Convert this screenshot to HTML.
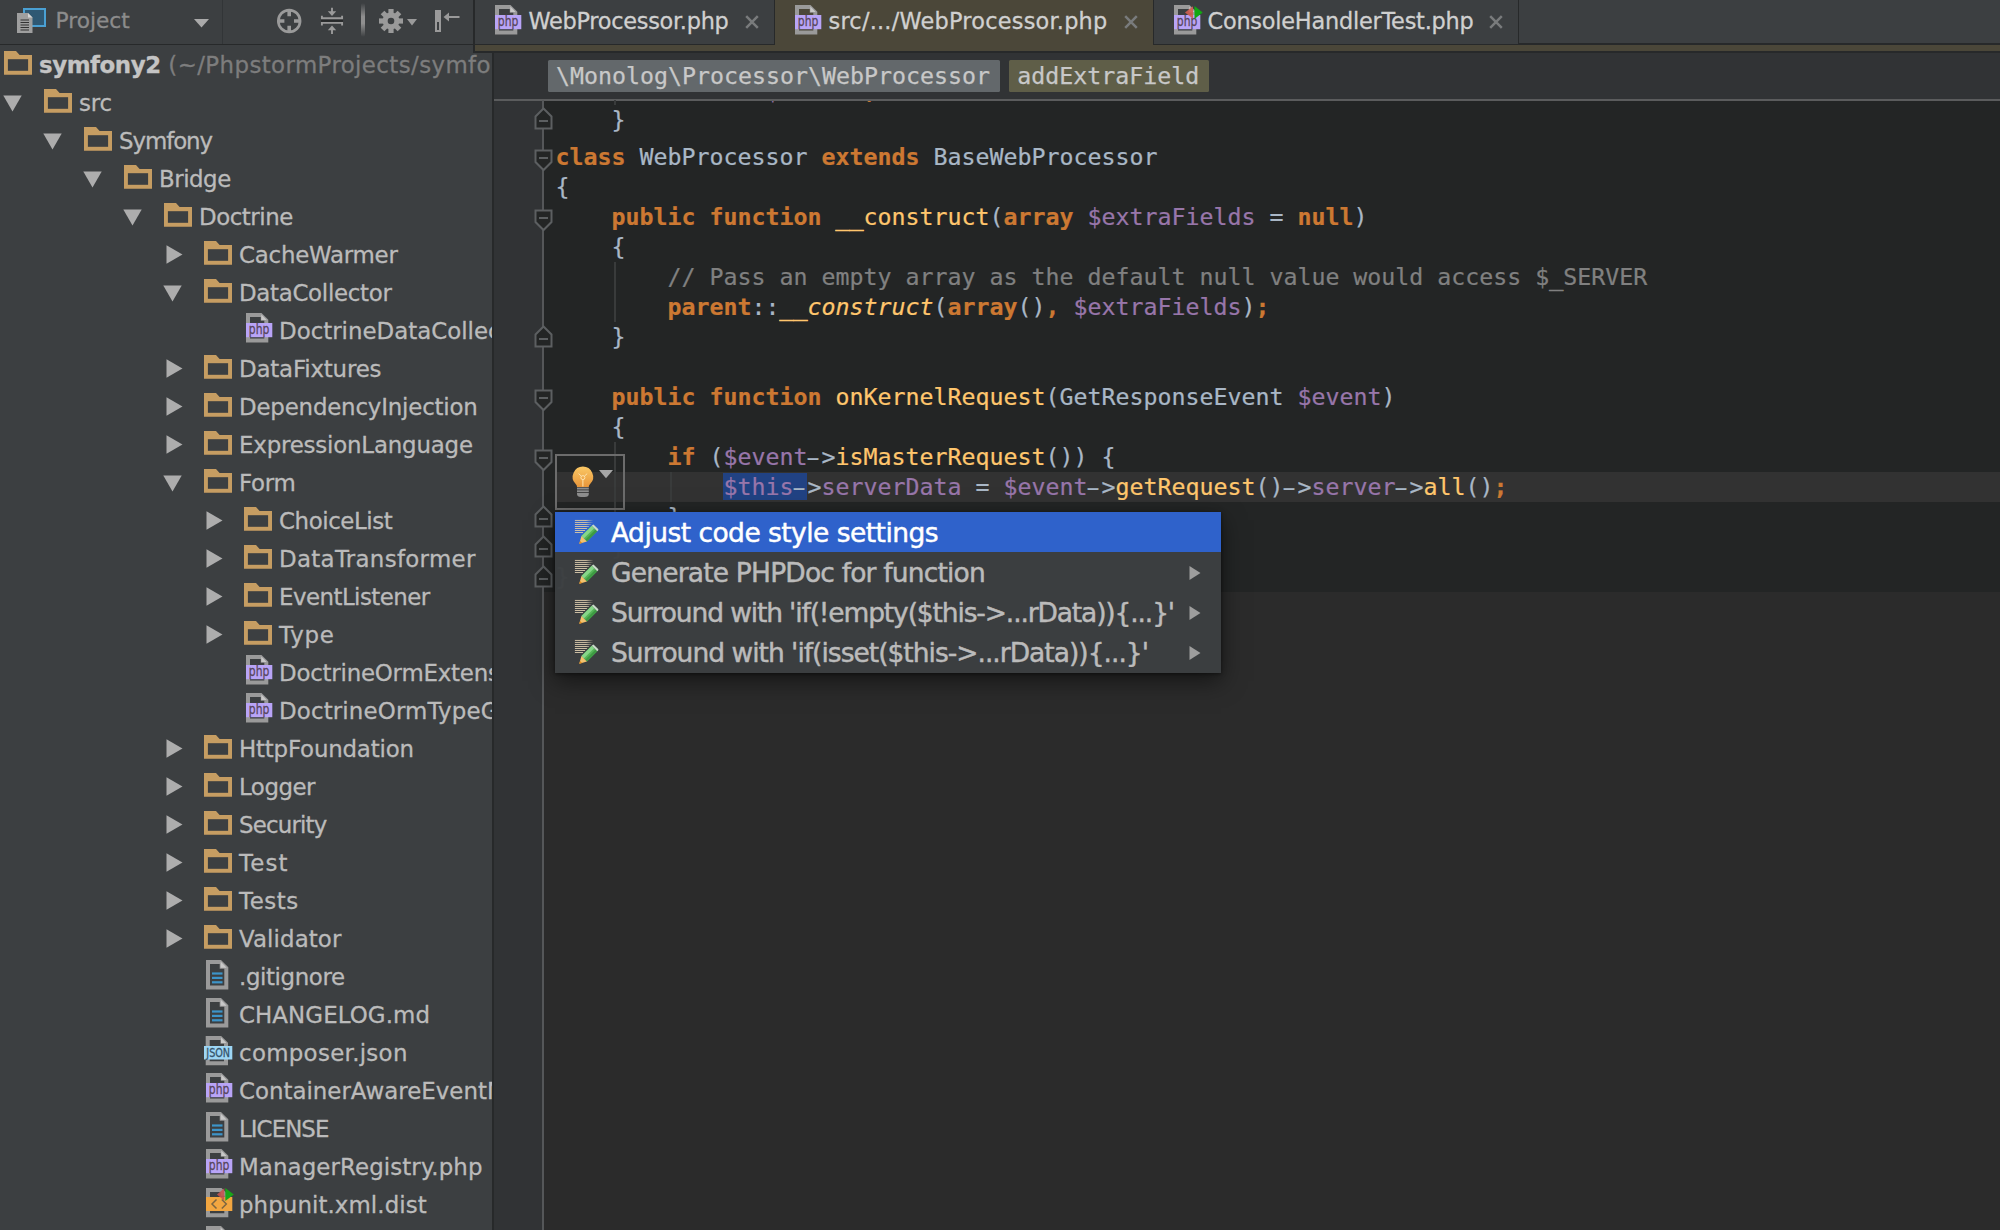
<!DOCTYPE html>
<html><head><meta charset="utf-8"><title>PhpStorm</title>
<style>
html,body{margin:0;padding:0;background:#3c3f41;}
body{width:2000px;height:1230px;position:relative;overflow:hidden;font-family:"DejaVu Sans","Liberation Sans",sans-serif;}
.abs,.ic,.tr,.cl{position:absolute;}
.ic{display:block;overflow:visible}
#left{position:absolute;left:0;top:0;width:492px;height:1230px;background:#3c3f41;overflow:hidden}
.tr{height:38px;line-height:38px;font-size:22.9px;color:#bbbbbb;white-space:pre;}
.tr b{font-weight:bold;color:#c4c4c4}
.gy{color:#7d7d7d}
#ltb{position:absolute;left:0;top:0;width:474px;height:44px;background:#3c3f41;border-bottom:1.5px solid #27292a;}
#proj{position:absolute;left:55.5px;top:0;height:42px;line-height:42px;font-size:21.7px;color:#8c8c8c}
#editor{position:absolute;left:494px;top:101px;width:1506px;height:1129px;background:#2b2b2b;overflow:hidden}
#codebg{position:absolute;left:50px;top:0;width:1456px;height:491px;background:#232525}
#gutter{position:absolute;left:0;top:0;width:50px;height:1130px;background:#313335}
#code{position:absolute;left:-494px;top:-100px;width:2000px;height:1230px;}
.cl{left:555.5px;height:30px;line-height:30px;font-family:"DejaVu Sans Mono","Liberation Mono",monospace;font-size:23.25px;color:#a9b7c6;white-space:pre;-webkit-text-stroke:0.22px currentColor}
.k{color:#cc7832;font-weight:bold} .v{color:#9876aa} .f{color:#ffc66d} .c{color:#808080} .i{font-style:italic}
.sel{background:#214283}
.hy{display:inline-block;transform:scaleX(1.75);transform-origin:60% 50%}
.tr,.tl,.pt,#proj{-webkit-text-stroke:0.3px currentColor}
.us{-webkit-text-stroke:0.7px currentColor}
.ig{position:absolute;width:1.5px;background:#393b3b}
#caret{position:absolute;left:555px;top:472px;width:1445px;height:30px;background:#323232}
#tabs{position:absolute;left:473px;top:0;width:1527px;height:53px;background:#3c3f41}
.tab{position:absolute;top:0;height:44.5px;box-sizing:border-box;border-right:1.5px solid #27292a;border-bottom:1.5px solid #27292a;background:#3c3f41;white-space:pre}
.tab.tsel{background:#4b4739;border-bottom:none;height:45px}
.tl{position:absolute;left:54px;top:0;line-height:42px;font-size:22.4px;color:#d0d0d0}
.tx{position:absolute;right:14px;top:0;line-height:40px;font-size:26px;color:#7f7f7f}
#crumbs{position:absolute;left:494px;top:53px;width:1506px;height:46px;background:#313335;border-bottom:2px solid #5b5c5d}
.chip{position:absolute;top:7px;height:32px;line-height:32px;font-family:"DejaVu Sans Mono","Liberation Mono",monospace;font-size:23.25px;color:#c8c8c8;white-space:pre;padding:0 8px;border-radius:1.5px;-webkit-text-stroke:0.25px currentColor}
#popup{position:absolute;left:555px;top:512px;width:666px;height:161px;background:rgba(60,63,65,0.985);box-shadow:0 8px 22px rgba(0,0,0,.5), 0 1px 4px rgba(0,0,0,.5)}
.pi{position:absolute;left:0;width:666px;height:40px;}
.ps{background:#2f62cb}
.pt{position:absolute;left:56px;top:0.5px;-webkit-text-stroke:0.45px currentColor;line-height:40px;font-size:26.5px;color:#bbbbbb;white-space:pre}
.ps .pt{color:#ffffff}
</style></head><body>
<div id="left">
<svg class="ic" style="left:4px;top:50.8px" width="28" height="24" viewBox="0 0 28 24"><path d="M0 0H12L15.6 4H28V23.8H0Z" fill="#c69d62"/><rect x="3.9" y="8.2" width="20.2" height="11.6" fill="#3c3f41"/></svg>
<div class="tr" style="left:39px;top:45.7px"><b style="letter-spacing:-0.45px">symfony2</b><span class="gy" style="letter-spacing:0.4px"> (~/PhpstormProjects/symfony2)</span></div>
<svg class="ic" style="left:3.4px;top:95px" width="19" height="17" viewBox="0 0 19 17"><path d="M0.3 0.5H18.7L9.5 16.5Z" fill="#adadad"/></svg>
<svg class="ic" style="left:44px;top:88.8px" width="28" height="24" viewBox="0 0 28 24"><path d="M0 0H12L15.6 4H28V23.8H0Z" fill="#c69d62"/><rect x="3.9" y="8.2" width="20.2" height="11.6" fill="#3c3f41"/></svg>
<div class="tr" style="left:79px;top:83.7px;letter-spacing:-0.141px">src</div>
<svg class="ic" style="left:43.4px;top:133px" width="19" height="17" viewBox="0 0 19 17"><path d="M0.3 0.5H18.7L9.5 16.5Z" fill="#adadad"/></svg>
<svg class="ic" style="left:84px;top:126.8px" width="28" height="24" viewBox="0 0 28 24"><path d="M0 0H12L15.6 4H28V23.8H0Z" fill="#c69d62"/><rect x="3.9" y="8.2" width="20.2" height="11.6" fill="#3c3f41"/></svg>
<div class="tr" style="left:119px;top:121.7px;letter-spacing:-1.071px">Symfony</div>
<svg class="ic" style="left:83.4px;top:171px" width="19" height="17" viewBox="0 0 19 17"><path d="M0.3 0.5H18.7L9.5 16.5Z" fill="#adadad"/></svg>
<svg class="ic" style="left:124px;top:164.8px" width="28" height="24" viewBox="0 0 28 24"><path d="M0 0H12L15.6 4H28V23.8H0Z" fill="#c69d62"/><rect x="3.9" y="8.2" width="20.2" height="11.6" fill="#3c3f41"/></svg>
<div class="tr" style="left:159px;top:159.7px;letter-spacing:-0.471px">Bridge</div>
<svg class="ic" style="left:123.4px;top:209px" width="19" height="17" viewBox="0 0 19 17"><path d="M0.3 0.5H18.7L9.5 16.5Z" fill="#adadad"/></svg>
<svg class="ic" style="left:164px;top:202.8px" width="28" height="24" viewBox="0 0 28 24"><path d="M0 0H12L15.6 4H28V23.8H0Z" fill="#c69d62"/><rect x="3.9" y="8.2" width="20.2" height="11.6" fill="#3c3f41"/></svg>
<div class="tr" style="left:199px;top:197.7px;letter-spacing:-0.47px">Doctrine</div>
<svg class="ic" style="left:165.5px;top:244.5px" width="17" height="19" viewBox="0 0 17 19"><path d="M0.5 0.3L16.5 9.5L0.5 18.7Z" fill="#adadad"/></svg>
<svg class="ic" style="left:204px;top:240.8px" width="28" height="24" viewBox="0 0 28 24"><path d="M0 0H12L15.6 4H28V23.8H0Z" fill="#c69d62"/><rect x="3.9" y="8.2" width="20.2" height="11.6" fill="#3c3f41"/></svg>
<div class="tr" style="left:239px;top:235.7px;letter-spacing:-0.235px">CacheWarmer</div>
<svg class="ic" style="left:163.4px;top:285px" width="19" height="17" viewBox="0 0 19 17"><path d="M0.3 0.5H18.7L9.5 16.5Z" fill="#adadad"/></svg>
<svg class="ic" style="left:204px;top:278.8px" width="28" height="24" viewBox="0 0 28 24"><path d="M0 0H12L15.6 4H28V23.8H0Z" fill="#c69d62"/><rect x="3.9" y="8.2" width="20.2" height="11.6" fill="#3c3f41"/></svg>
<div class="tr" style="left:239px;top:273.7px;letter-spacing:-0.303px">DataCollector</div>
<svg class="ic" style="left:245.7px;top:313.2px" width="27" height="30" viewBox="0 0 27 30"><path d="M0 0H15.5L22.3 6.8V29.6H0Z" fill="#9a9a9a"/><path d="M4 4H14.8V7.8H18.3V25.6H4Z" fill="#3c3f41"/><path d="M15.3 1.6L20.7 7H15.3Z" fill="#c8c8c8"/><rect x="0" y="10" width="26.3" height="14.2" fill="#b9a4f7"/><text x="2.8" y="20.6" font-family='"DejaVu Sans","Liberation Sans",sans-serif' font-size="14.8" textLength="20.5" lengthAdjust="spacingAndGlyphs" fill="#57465c" stroke="#57465c" stroke-width="0.3">php</text></svg>
<div class="tr" style="left:279px;top:311.7px">DoctrineDataCollector.php</div>
<svg class="ic" style="left:165.5px;top:358.5px" width="17" height="19" viewBox="0 0 17 19"><path d="M0.5 0.3L16.5 9.5L0.5 18.7Z" fill="#adadad"/></svg>
<svg class="ic" style="left:204px;top:354.8px" width="28" height="24" viewBox="0 0 28 24"><path d="M0 0H12L15.6 4H28V23.8H0Z" fill="#c69d62"/><rect x="3.9" y="8.2" width="20.2" height="11.6" fill="#3c3f41"/></svg>
<div class="tr" style="left:239px;top:349.7px;letter-spacing:-0.181px">DataFixtures</div>
<svg class="ic" style="left:165.5px;top:396.5px" width="17" height="19" viewBox="0 0 17 19"><path d="M0.5 0.3L16.5 9.5L0.5 18.7Z" fill="#adadad"/></svg>
<svg class="ic" style="left:204px;top:392.8px" width="28" height="24" viewBox="0 0 28 24"><path d="M0 0H12L15.6 4H28V23.8H0Z" fill="#c69d62"/><rect x="3.9" y="8.2" width="20.2" height="11.6" fill="#3c3f41"/></svg>
<div class="tr" style="left:239px;top:387.7px;letter-spacing:-0.19px">DependencyInjection</div>
<svg class="ic" style="left:165.5px;top:434.5px" width="17" height="19" viewBox="0 0 17 19"><path d="M0.5 0.3L16.5 9.5L0.5 18.7Z" fill="#adadad"/></svg>
<svg class="ic" style="left:204px;top:430.8px" width="28" height="24" viewBox="0 0 28 24"><path d="M0 0H12L15.6 4H28V23.8H0Z" fill="#c69d62"/><rect x="3.9" y="8.2" width="20.2" height="11.6" fill="#3c3f41"/></svg>
<div class="tr" style="left:239px;top:425.7px;letter-spacing:-0.191px">ExpressionLanguage</div>
<svg class="ic" style="left:163.4px;top:475px" width="19" height="17" viewBox="0 0 19 17"><path d="M0.3 0.5H18.7L9.5 16.5Z" fill="#adadad"/></svg>
<svg class="ic" style="left:204px;top:468.8px" width="28" height="24" viewBox="0 0 28 24"><path d="M0 0H12L15.6 4H28V23.8H0Z" fill="#c69d62"/><rect x="3.9" y="8.2" width="20.2" height="11.6" fill="#3c3f41"/></svg>
<div class="tr" style="left:239px;top:463.7px;letter-spacing:-0.293px">Form</div>
<svg class="ic" style="left:205.5px;top:510.5px" width="17" height="19" viewBox="0 0 17 19"><path d="M0.5 0.3L16.5 9.5L0.5 18.7Z" fill="#adadad"/></svg>
<svg class="ic" style="left:244px;top:506.8px" width="28" height="24" viewBox="0 0 28 24"><path d="M0 0H12L15.6 4H28V23.8H0Z" fill="#c69d62"/><rect x="3.9" y="8.2" width="20.2" height="11.6" fill="#3c3f41"/></svg>
<div class="tr" style="left:279px;top:501.7px;letter-spacing:-0.425px">ChoiceList</div>
<svg class="ic" style="left:205.5px;top:548.5px" width="17" height="19" viewBox="0 0 17 19"><path d="M0.5 0.3L16.5 9.5L0.5 18.7Z" fill="#adadad"/></svg>
<svg class="ic" style="left:244px;top:544.8px" width="28" height="24" viewBox="0 0 28 24"><path d="M0 0H12L15.6 4H28V23.8H0Z" fill="#c69d62"/><rect x="3.9" y="8.2" width="20.2" height="11.6" fill="#3c3f41"/></svg>
<div class="tr" style="left:279px;top:539.7px;letter-spacing:0.306px">DataTransformer</div>
<svg class="ic" style="left:205.5px;top:586.5px" width="17" height="19" viewBox="0 0 17 19"><path d="M0.5 0.3L16.5 9.5L0.5 18.7Z" fill="#adadad"/></svg>
<svg class="ic" style="left:244px;top:582.8px" width="28" height="24" viewBox="0 0 28 24"><path d="M0 0H12L15.6 4H28V23.8H0Z" fill="#c69d62"/><rect x="3.9" y="8.2" width="20.2" height="11.6" fill="#3c3f41"/></svg>
<div class="tr" style="left:279px;top:577.7px;letter-spacing:-0.538px">EventListener</div>
<svg class="ic" style="left:205.5px;top:624.5px" width="17" height="19" viewBox="0 0 17 19"><path d="M0.5 0.3L16.5 9.5L0.5 18.7Z" fill="#adadad"/></svg>
<svg class="ic" style="left:244px;top:620.8px" width="28" height="24" viewBox="0 0 28 24"><path d="M0 0H12L15.6 4H28V23.8H0Z" fill="#c69d62"/><rect x="3.9" y="8.2" width="20.2" height="11.6" fill="#3c3f41"/></svg>
<div class="tr" style="left:279px;top:615.7px;letter-spacing:0.73px">Type</div>
<svg class="ic" style="left:245.7px;top:655.2px" width="27" height="30" viewBox="0 0 27 30"><path d="M0 0H15.5L22.3 6.8V29.6H0Z" fill="#9a9a9a"/><path d="M4 4H14.8V7.8H18.3V25.6H4Z" fill="#3c3f41"/><path d="M15.3 1.6L20.7 7H15.3Z" fill="#c8c8c8"/><rect x="0" y="10" width="26.3" height="14.2" fill="#b9a4f7"/><text x="2.8" y="20.6" font-family='"DejaVu Sans","Liberation Sans",sans-serif' font-size="14.8" textLength="20.5" lengthAdjust="spacingAndGlyphs" fill="#57465c" stroke="#57465c" stroke-width="0.3">php</text></svg>
<div class="tr" style="left:279px;top:653.7px;letter-spacing:-0.22px">DoctrineOrmExtension.php</div>
<svg class="ic" style="left:245.7px;top:693.2px" width="27" height="30" viewBox="0 0 27 30"><path d="M0 0H15.5L22.3 6.8V29.6H0Z" fill="#9a9a9a"/><path d="M4 4H14.8V7.8H18.3V25.6H4Z" fill="#3c3f41"/><path d="M15.3 1.6L20.7 7H15.3Z" fill="#c8c8c8"/><rect x="0" y="10" width="26.3" height="14.2" fill="#b9a4f7"/><text x="2.8" y="20.6" font-family='"DejaVu Sans","Liberation Sans",sans-serif' font-size="14.8" textLength="20.5" lengthAdjust="spacingAndGlyphs" fill="#57465c" stroke="#57465c" stroke-width="0.3">php</text></svg>
<div class="tr" style="left:279px;top:691.7px;letter-spacing:0.15px">DoctrineOrmTypeGuesser.php</div>
<svg class="ic" style="left:165.5px;top:738.5px" width="17" height="19" viewBox="0 0 17 19"><path d="M0.5 0.3L16.5 9.5L0.5 18.7Z" fill="#adadad"/></svg>
<svg class="ic" style="left:204px;top:734.8px" width="28" height="24" viewBox="0 0 28 24"><path d="M0 0H12L15.6 4H28V23.8H0Z" fill="#c69d62"/><rect x="3.9" y="8.2" width="20.2" height="11.6" fill="#3c3f41"/></svg>
<div class="tr" style="left:239px;top:729.7px;letter-spacing:-0.192px">HttpFoundation</div>
<svg class="ic" style="left:165.5px;top:776.5px" width="17" height="19" viewBox="0 0 17 19"><path d="M0.5 0.3L16.5 9.5L0.5 18.7Z" fill="#adadad"/></svg>
<svg class="ic" style="left:204px;top:772.8px" width="28" height="24" viewBox="0 0 28 24"><path d="M0 0H12L15.6 4H28V23.8H0Z" fill="#c69d62"/><rect x="3.9" y="8.2" width="20.2" height="11.6" fill="#3c3f41"/></svg>
<div class="tr" style="left:239px;top:767.7px;letter-spacing:-0.487px">Logger</div>
<svg class="ic" style="left:165.5px;top:814.5px" width="17" height="19" viewBox="0 0 17 19"><path d="M0.5 0.3L16.5 9.5L0.5 18.7Z" fill="#adadad"/></svg>
<svg class="ic" style="left:204px;top:810.8px" width="28" height="24" viewBox="0 0 28 24"><path d="M0 0H12L15.6 4H28V23.8H0Z" fill="#c69d62"/><rect x="3.9" y="8.2" width="20.2" height="11.6" fill="#3c3f41"/></svg>
<div class="tr" style="left:239px;top:805.7px;letter-spacing:-0.825px">Security</div>
<svg class="ic" style="left:165.5px;top:852.5px" width="17" height="19" viewBox="0 0 17 19"><path d="M0.5 0.3L16.5 9.5L0.5 18.7Z" fill="#adadad"/></svg>
<svg class="ic" style="left:204px;top:848.8px" width="28" height="24" viewBox="0 0 28 24"><path d="M0 0H12L15.6 4H28V23.8H0Z" fill="#c69d62"/><rect x="3.9" y="8.2" width="20.2" height="11.6" fill="#3c3f41"/></svg>
<div class="tr" style="left:239px;top:843.7px;letter-spacing:1.13px">Test</div>
<svg class="ic" style="left:165.5px;top:890.5px" width="17" height="19" viewBox="0 0 17 19"><path d="M0.5 0.3L16.5 9.5L0.5 18.7Z" fill="#adadad"/></svg>
<svg class="ic" style="left:204px;top:886.8px" width="28" height="24" viewBox="0 0 28 24"><path d="M0 0H12L15.6 4H28V23.8H0Z" fill="#c69d62"/><rect x="3.9" y="8.2" width="20.2" height="11.6" fill="#3c3f41"/></svg>
<div class="tr" style="left:239px;top:881.7px;letter-spacing:0.557px">Tests</div>
<svg class="ic" style="left:165.5px;top:928.5px" width="17" height="19" viewBox="0 0 17 19"><path d="M0.5 0.3L16.5 9.5L0.5 18.7Z" fill="#adadad"/></svg>
<svg class="ic" style="left:204px;top:924.8px" width="28" height="24" viewBox="0 0 28 24"><path d="M0 0H12L15.6 4H28V23.8H0Z" fill="#c69d62"/><rect x="3.9" y="8.2" width="20.2" height="11.6" fill="#3c3f41"/></svg>
<div class="tr" style="left:239px;top:919.7px;letter-spacing:0.102px">Validator</div>
<svg class="ic" style="left:205.7px;top:959.5px" width="23" height="30" viewBox="0 0 23 30"><path d="M0 0H15L22.3 7.3V29.5H0Z" fill="#9a9a9a"/><path d="M4 4H13.7V8.8H18.3V25.5H4Z" fill="#3c3f41"/><path d="M14.6 1.6L20.7 7.7H14.6Z" fill="#c8c8c8"/><g fill="#3d94c9"><rect x="6" y="12.4" width="10.5" height="2.2"/><rect x="6" y="16.8" width="10.5" height="2.2"/><rect x="6" y="21.2" width="10.5" height="2.2"/></g></svg>
<div class="tr" style="left:239px;top:957.7px;letter-spacing:-0.385px">.gitignore</div>
<svg class="ic" style="left:205.7px;top:997.5px" width="23" height="30" viewBox="0 0 23 30"><path d="M0 0H15L22.3 7.3V29.5H0Z" fill="#9a9a9a"/><path d="M4 4H13.7V8.8H18.3V25.5H4Z" fill="#3c3f41"/><path d="M14.6 1.6L20.7 7.7H14.6Z" fill="#c8c8c8"/><g fill="#3d94c9"><rect x="6" y="12.4" width="10.5" height="2.2"/><rect x="6" y="16.8" width="10.5" height="2.2"/><rect x="6" y="21.2" width="10.5" height="2.2"/></g></svg>
<div class="tr" style="left:239px;top:995.7px;letter-spacing:0.085px">CHANGELOG.md</div>
<svg class="ic" style="left:204px;top:1035.5px" width="29" height="30" viewBox="0 0 29 30"><path d="M1.7 0H17.2L24 6.8V29.2H1.7Z" fill="#9a9a9a"/><path d="M5.7 4H16.5V7.8H20V25.2H5.7Z" fill="#3c3f41"/><path d="M17 1.6L22.4 7H17Z" fill="#c8c8c8"/><rect x="0" y="10" width="28.3" height="13.5" fill="#9dd6f5"/><text x="2.3" y="21" font-family='"DejaVu Sans","Liberation Sans",sans-serif' font-size="12" textLength="23.8" lengthAdjust="spacingAndGlyphs" fill="#35536a" stroke="#35536a" stroke-width="0.3">JSON</text></svg>
<div class="tr" style="left:239px;top:1033.7px;letter-spacing:0.298px">composer.json</div>
<svg class="ic" style="left:205.7px;top:1073.2px" width="27" height="30" viewBox="0 0 27 30"><path d="M0 0H15.5L22.3 6.8V29.6H0Z" fill="#9a9a9a"/><path d="M4 4H14.8V7.8H18.3V25.6H4Z" fill="#3c3f41"/><path d="M15.3 1.6L20.7 7H15.3Z" fill="#c8c8c8"/><rect x="0" y="10" width="26.3" height="14.2" fill="#b9a4f7"/><text x="2.8" y="20.6" font-family='"DejaVu Sans","Liberation Sans",sans-serif' font-size="14.8" textLength="20.5" lengthAdjust="spacingAndGlyphs" fill="#57465c" stroke="#57465c" stroke-width="0.3">php</text></svg>
<div class="tr" style="left:239px;top:1071.7px">ContainerAwareEventManager.php</div>
<svg class="ic" style="left:205.7px;top:1111.5px" width="23" height="30" viewBox="0 0 23 30"><path d="M0 0H15L22.3 7.3V29.5H0Z" fill="#9a9a9a"/><path d="M4 4H13.7V8.8H18.3V25.5H4Z" fill="#3c3f41"/><path d="M14.6 1.6L20.7 7.7H14.6Z" fill="#c8c8c8"/><g fill="#3d94c9"><rect x="6" y="12.4" width="10.5" height="2.2"/><rect x="6" y="16.8" width="10.5" height="2.2"/><rect x="6" y="21.2" width="10.5" height="2.2"/></g></svg>
<div class="tr" style="left:239px;top:1109.7px;letter-spacing:-0.94px">LICENSE</div>
<svg class="ic" style="left:205.7px;top:1149.2px" width="27" height="30" viewBox="0 0 27 30"><path d="M0 0H15.5L22.3 6.8V29.6H0Z" fill="#9a9a9a"/><path d="M4 4H14.8V7.8H18.3V25.6H4Z" fill="#3c3f41"/><path d="M15.3 1.6L20.7 7H15.3Z" fill="#c8c8c8"/><rect x="0" y="10" width="26.3" height="14.2" fill="#b9a4f7"/><text x="2.8" y="20.6" font-family='"DejaVu Sans","Liberation Sans",sans-serif' font-size="14.8" textLength="20.5" lengthAdjust="spacingAndGlyphs" fill="#57465c" stroke="#57465c" stroke-width="0.3">php</text></svg>
<div class="tr" style="left:239px;top:1147.7px;letter-spacing:0.099px">ManagerRegistry.php</div>
<svg class="ic" style="left:205.7px;top:1187.5px" width="29" height="30" viewBox="0 0 29 30"><path d="M0 0H15.5L22.3 6.8V29.2H0Z" fill="#9a9a9a"/><path d="M4 4H14.8V7.8H18.3V25.2H4Z" fill="#3c3f41"/><rect x="0" y="9" width="26.3" height="14" fill="#f2a640"/><path d="M10.5 11.5L6 16L10.5 20.5M15.8 11.5L20.3 16L15.8 20.5" stroke="#7c6640" stroke-width="1.5" fill="none"/><path d="M18.3 0.2L11 6.5L18.3 12.8Z" fill="#c75450" opacity="0.9"/><path d="M19.3 0L27.8 6.5L19.3 13Z" fill="#19a519"/></svg>
<div class="tr" style="left:239px;top:1185.7px;letter-spacing:0.083px">phpunit.xml.dist</div>
<svg class="ic" style="left:205.7px;top:1225.5px" width="23" height="30" viewBox="0 0 23 30"><path d="M0 0H15L22.3 7.3V29.5H0Z" fill="#9a9a9a"/><path d="M4 4H13.7V8.8H18.3V25.5H4Z" fill="#3c3f41"/><path d="M14.6 1.6L20.7 7.7H14.6Z" fill="#c8c8c8"/><g fill="#3d94c9"><rect x="6" y="12.4" width="10.5" height="2.2"/><rect x="6" y="16.8" width="10.5" height="2.2"/><rect x="6" y="21.2" width="10.5" height="2.2"/></g></svg>
<div class="tr" style="left:239px;top:1223.7px">README.md</div>
</div>
<div class="abs" style="left:492px;top:52px;width:2px;height:1178px;background:#27292a"></div>
<div id="ltb">
<svg class="ic" style="left:16px;top:8px" width="30" height="26" viewBox="0 0 30 26"><rect x="8" y="1" width="21" height="17" fill="#2f5873" stroke="#4aa0d3" stroke-width="2"/><path d="M1 5H12L16.5 9.5V25H1Z" fill="#9f9f9f"/><path d="M12 5V9.5H16.5Z" fill="#d5d5d5"/><g stroke="#333" stroke-width="1.1"><path d="M4.5 12H13M4.5 14.5H13M4.5 17H13M4.5 19.5H13M4.5 22H13"/></g></svg>
<div id="proj">Project</div>
<svg class="ic" style="left:194px;top:19px" width="15" height="9" viewBox="0 0 15 9"><path d="M0 0H15L7.5 8.5Z" fill="#aaaaaa"/></svg>
<div class="abs" style="left:221.5px;top:0;width:1.5px;height:44px;background:#323537"></div>
<svg class="ic" style="left:276px;top:8px" width="26" height="26" viewBox="0 0 26 26"><circle cx="13.2" cy="13" r="10.9" fill="none" stroke="#9a9a9a" stroke-width="2.7"/><path d="M13.2 2V8.2M13.2 17.8V24M2.2 13H8.4M18 13H24.2" stroke="#9a9a9a" stroke-width="3.6"/></svg>
<svg class="ic" style="left:320px;top:7px" width="24" height="28" viewBox="0 0 24 28"><rect x="1" y="12.4" width="22" height="2.4" fill="#27292a"/><g stroke="#9a9a9a" stroke-width="1.9" fill="none"><path d="M1 11.3H23M1 15.9H23M1.9 8.8V12.2M22.1 8.8V12.2M1.9 15V18.6M22.1 15V18.6"/><path d="M12 0.8V6M12 27V21.5"/></g><path d="M7.8 4.3L12 9L16.2 4.3ZM7.8 23.2L12 18.4L16.2 23.2Z" fill="#9a9a9a"/></svg>
<div class="abs" style="left:361px;top:3px;width:4px;height:34px;background:linear-gradient(to bottom,rgba(130,130,130,0),#8f8f8f 40%,#8f8f8f 60%,rgba(130,130,130,0));border-radius:2px"></div>
<svg class="ic" style="left:378px;top:8px" width="26" height="26" viewBox="0 0 26 26"><g transform="translate(13 13)"><g fill="#9a9a9a"><rect x="-2.6" y="-12" width="5.2" height="24"/><rect x="-2.6" y="-12" width="5.2" height="24" transform="rotate(45)"/><rect x="-2.6" y="-12" width="5.2" height="24" transform="rotate(90)"/><rect x="-2.6" y="-12" width="5.2" height="24" transform="rotate(135)"/><circle r="8.4"/></g><circle r="3.3" fill="#3c3f41"/></g></svg>
<svg class="ic" style="left:407px;top:19px" width="10" height="7" viewBox="0 0 10 7"><path d="M0 0H10L5 6.5Z" fill="#9a9a9a"/></svg>
<svg class="ic" style="left:434px;top:9px" width="27" height="24" viewBox="0 0 27 24"><path d="M1 1H7V23H1Z" fill="#9a9a9a"/><rect x="3" y="13" width="2" height="8" fill="#3c3f41"/><path d="M9.5 8L15 3.5V12.5Z" fill="#9a9a9a"/><path d="M13 8H25.5" stroke="#9a9a9a" stroke-width="2"/></svg>
</div>
<div id="tabs">
<div class="abs" style="left:0;top:0;width:1.5px;height:53px;background:#27292a"></div>
<div class="abs" style="left:0;top:43px;width:1527px;height:1.5px;background:#27292a"></div>
<div class="abs" style="left:1.5px;top:44.5px;width:1526px;height:6.5px;background:#4b4739"></div>
<div class="abs" style="left:0;top:51px;width:1527px;height:2px;background:#27292a"></div>
<div class="tab" style="left:1.5px;width:300px"><svg class="ic" style="left:20.5px;top:5px" width="27" height="30" viewBox="0 0 27 30"><path d="M0 0H15.5L22.3 6.8V29.6H0Z" fill="#9a9a9a"/><path d="M4 4H14.8V7.8H18.3V25.6H4Z" fill="#3c3f41"/><path d="M15.3 1.6L20.7 7H15.3Z" fill="#c8c8c8"/><rect x="0" y="10" width="26.3" height="14.2" fill="#b9a4f7"/><text x="2.8" y="20.6" font-family='"DejaVu Sans","Liberation Sans",sans-serif' font-size="14.8" textLength="20.5" lengthAdjust="spacingAndGlyphs" fill="#57465c" stroke="#57465c" stroke-width="0.3">php</text></svg><span class="tl" style="letter-spacing:-0.271px">WebProcessor.php</span><svg class="ic" style="right:15px;top:15px" width="14" height="14" viewBox="0 0 14 14"><path d="M1.2 1.2L12.8 12.8M12.8 1.2L1.2 12.8" stroke="#797b7c" stroke-width="2.5"/></svg></div>
<div class="tab tsel" style="left:301.5px;width:379px"><svg class="ic" style="left:20.5px;top:5px" width="27" height="30" viewBox="0 0 27 30"><path d="M0 0H15.5L22.3 6.8V29.6H0Z" fill="#9a9a9a"/><path d="M4 4H14.8V7.8H18.3V25.6H4Z" fill="#4b4739"/><path d="M15.3 1.6L20.7 7H15.3Z" fill="#c8c8c8"/><rect x="0" y="10" width="26.3" height="14.2" fill="#b9a4f7"/><text x="2.8" y="20.6" font-family='"DejaVu Sans","Liberation Sans",sans-serif' font-size="14.8" textLength="20.5" lengthAdjust="spacingAndGlyphs" fill="#57465c" stroke="#57465c" stroke-width="0.3">php</text></svg><span class="tl" style="letter-spacing:0.23px">src/.../WebProcessor.php</span><svg class="ic" style="right:15px;top:15px" width="14" height="14" viewBox="0 0 14 14"><path d="M1.2 1.2L12.8 12.8M12.8 1.2L1.2 12.8" stroke="#797b7c" stroke-width="2.5"/></svg></div>
<div class="tab" style="left:680.5px;width:365px"><svg class="ic" style="left:20.5px;top:5px" width="27" height="30" viewBox="0 0 27 30"><path d="M0 0H15.5L22.3 6.8V29.6H0Z" fill="#9a9a9a"/><path d="M4 4H14.8V7.8H18.3V25.6H4Z" fill="#3c3f41"/><path d="M15.3 1.6L20.7 7H15.3Z" fill="#c8c8c8"/><rect x="0" y="10" width="26.3" height="14.2" fill="#b9a4f7"/><text x="2.8" y="20.6" font-family='"DejaVu Sans","Liberation Sans",sans-serif' font-size="14.8" textLength="20.5" lengthAdjust="spacingAndGlyphs" fill="#57465c" stroke="#57465c" stroke-width="0.3">php</text></svg><svg class="ic" style="left:31px;top:5.5px" width="18" height="13" viewBox="0 0 18 13"><path d="M8 0.3L0 6.5L8 12.7Z" fill="#cf5f52" opacity="0.92"/><path d="M9.5 0L17.7 6.5L9.5 13Z" fill="#12a812"/></svg><span class="tl" style="letter-spacing:-0.222px">ConsoleHandlerTest.php</span><svg class="ic" style="right:15px;top:15px" width="14" height="14" viewBox="0 0 14 14"><path d="M1.2 1.2L12.8 12.8M12.8 1.2L1.2 12.8" stroke="#797b7c" stroke-width="2.5"/></svg></div>
</div>
<div id="crumbs">
<div class="chip" style="left:54px;padding-right:9.7px;background:#63686b">\Monolog\Processor\WebProcessor</div>
<div class="chip" style="left:515.3px;padding-right:9.5px;background:#5f5e48">addExtraField</div>
</div>
<div id="editor">
<div id="gutter"></div>
<div id="codebg"></div>
</div>
<div id="caret"></div>
<div class="ig" style="left:614.3px;top:100px;height:5px"></div>
<div class="ig" style="left:614.3px;top:262px;height:60px"></div>
<div class="ig" style="left:614.3px;top:442px;height:90px"></div>
<div class="ig" style="left:670.3px;top:472px;height:30px"></div>
<div class="abs" style="left:542px;top:100px;width:2.2px;height:1130px;background:#555759"></div>
<svg class="ic" style="left:534px;top:106px" width="19" height="25" viewBox="0 0 19 25"><path d="M1.5 22.5H17.5V10.5L9.5 2.5L1.5 10.5Z" fill="#232525" stroke="#5c5f61" stroke-width="2"/><path d="M5 15H14" stroke="#5c5f61" stroke-width="2"/></svg>
<svg class="ic" style="left:534px;top:149px" width="19" height="25" viewBox="0 0 19 25"><path d="M1.5 1.5H17.5V13L9.5 21L1.5 13Z" fill="#232525" stroke="#5c5f61" stroke-width="2"/><path d="M5 9H14" stroke="#5c5f61" stroke-width="2"/></svg>
<svg class="ic" style="left:534px;top:209px" width="19" height="25" viewBox="0 0 19 25"><path d="M1.5 1.5H17.5V13L9.5 21L1.5 13Z" fill="#232525" stroke="#5c5f61" stroke-width="2"/><path d="M5 9H14" stroke="#5c5f61" stroke-width="2"/></svg>
<svg class="ic" style="left:534px;top:324px" width="19" height="25" viewBox="0 0 19 25"><path d="M1.5 22.5H17.5V10.5L9.5 2.5L1.5 10.5Z" fill="#232525" stroke="#5c5f61" stroke-width="2"/><path d="M5 15H14" stroke="#5c5f61" stroke-width="2"/></svg>
<svg class="ic" style="left:534px;top:389px" width="19" height="25" viewBox="0 0 19 25"><path d="M1.5 1.5H17.5V13L9.5 21L1.5 13Z" fill="#232525" stroke="#5c5f61" stroke-width="2"/><path d="M5 9H14" stroke="#5c5f61" stroke-width="2"/></svg>
<svg class="ic" style="left:534px;top:449px" width="19" height="25" viewBox="0 0 19 25"><path d="M1.5 1.5H17.5V13L9.5 21L1.5 13Z" fill="#232525" stroke="#5c5f61" stroke-width="2"/><path d="M5 9H14" stroke="#5c5f61" stroke-width="2"/></svg>
<svg class="ic" style="left:534px;top:504px" width="19" height="25" viewBox="0 0 19 25"><path d="M1.5 22.5H17.5V10.5L9.5 2.5L1.5 10.5Z" fill="#232525" stroke="#5c5f61" stroke-width="2"/><path d="M5 15H14" stroke="#5c5f61" stroke-width="2"/></svg>
<svg class="ic" style="left:534px;top:534px" width="19" height="25" viewBox="0 0 19 25"><path d="M1.5 22.5H17.5V10.5L9.5 2.5L1.5 10.5Z" fill="#232525" stroke="#5c5f61" stroke-width="2"/><path d="M5 15H14" stroke="#5c5f61" stroke-width="2"/></svg>
<svg class="ic" style="left:534px;top:564px" width="19" height="25" viewBox="0 0 19 25"><path d="M1.5 22.5H17.5V10.5L9.5 2.5L1.5 10.5Z" fill="#232525" stroke="#5c5f61" stroke-width="2"/><path d="M5 15H14" stroke="#5c5f61" stroke-width="2"/></svg>
<div class="abs" style="left:0;top:100.5px;width:2000px;height:1130px;overflow:hidden;pointer-events:none"><div style="position:absolute;left:0;top:-100.5px">
<div class="cl" style="top:76px">        <span class="k">return </span><span class="v">$record</span><span class="k">;</span></div>
<div class="cl" style="top:105px">    }</div>
<div class="cl" style="top:142px"><span class="k">class</span> WebProcessor <span class="k">extends</span> BaseWebProcessor</div>
<div class="cl" style="top:172px">{</div>
<div class="cl" style="top:202px">    <span class="k">public function </span><span class="f"><span class="us">__</span>construct</span>(<span class="k">array </span><span class="v">$extraFields</span> = <span class="k">null</span>)</div>
<div class="cl" style="top:232px">    {</div>
<div class="cl" style="top:262px">        <span class="c">// Pass an empty array as the default null value would access $<span class="us">_</span>SERVER</span></div>
<div class="cl" style="top:292px">        <span class="k">parent</span>::<span class="f i"><span class="us">__</span>construct</span>(<span class="k">array</span>()<span class="k">, </span><span class="v">$extraFields</span>)<span class="k">;</span></div>
<div class="cl" style="top:322px">    }</div>
<div class="cl" style="top:352px"></div>
<div class="cl" style="top:382px">    <span class="k">public function </span><span class="f">onKernelRequest</span>(GetResponseEvent <span class="v">$event</span>)</div>
<div class="cl" style="top:412px">    {</div>
<div class="cl" style="top:442px">        <span class="k">if</span> (<span class="v">$event</span><span class="hy">-</span>><span class="f">isMasterRequest</span>()) {</div>
<div class="cl" style="top:472px">            <span class="sel"><span class="v">$this</span><span class="hy">-</span></span>><span class="v">serverData</span> = <span class="v">$event</span><span class="hy">-</span>><span class="f">getRequest</span>()<span class="hy">-</span>><span class="v">server</span><span class="hy">-</span>><span class="f">all</span>()<span class="k">;</span></div>
<div class="cl" style="top:502px">        }</div>
<div class="cl" style="top:532px">    }</div>
<div class="cl" style="top:562px">}</div>
</div></div>
<div class="abs" style="left:555px;top:454px;width:70px;height:56px;box-sizing:border-box;border:2px solid #6c6c6c"></div>
<svg class="ic" style="left:571px;top:466px" width="24" height="32" viewBox="0 0 24 32"><defs><linearGradient id="bg" x1="0" x2="0" y1="0" y2="1"><stop offset="0" stop-color="#fbc865"/><stop offset="1" stop-color="#e7953a"/></linearGradient></defs><path d="M11.9 0.6A10.2 10.2 0 0 1 19.5 17.6C18.3 18.9 17.8 19.8 17.8 21H6C6 19.8 5.5 18.9 4.3 17.6A10.2 10.2 0 0 1 11.9 0.6Z" fill="url(#bg)"/><g fill="#8e8e8e"><rect x="6" y="21.6" width="11.8" height="1.9"/><rect x="6" y="24.3" width="11.8" height="1.9"/><path d="M6 27H17.8V28A4 3 0 0 1 13.8 31H10A4 3 0 0 1 6 28Z"/></g><g stroke="#fde3ae" stroke-width="1" fill="none"><path d="M7.6 7.6L10.4 10.2M16.2 7.6L13.4 10.2M11.9 13.6V20.5"/><circle cx="11.9" cy="11.6" r="2"/></g></svg>
<svg class="ic" style="left:599px;top:470px" width="14" height="9" viewBox="0 0 14 9"><path d="M0 0H14L7 8.3Z" fill="#a6a6a6"/></svg>
<div id="popup">
<div class="pi ps" style="top:0px"><svg class="ic" style="left:19px;top:7px" width="26" height="27" viewBox="0 0 26 27"><defs><linearGradient id="lf1" gradientUnits="userSpaceOnUse" x1="0" x2="19.4" y1="0" y2="0"><stop offset="0" stop-color="#d3c4a8"/><stop offset="0.62" stop-color="#d3c4a8"/><stop offset="1" stop-color="#d3c4a8" stop-opacity="0"/></linearGradient></defs><g fill="url(#lf1)"><rect x="0.9" y="0.95" width="18.5" height="0.95"/><rect x="0.9" y="2.96" width="18.5" height="0.95"/><rect x="0.9" y="4.97" width="16.3" height="0.95"/><rect x="0.9" y="6.98" width="14.2" height="0.95"/><rect x="0.9" y="8.99" width="12.2" height="0.95"/><rect x="0.9" y="11.00" width="10.2" height="0.95"/><rect x="0.9" y="13.01" width="8.2" height="0.95"/></g><path d="M7.44 17.09L17.76 6.77L23.28 12.29L12.96 22.61Z" fill="#55b558"/><path d="M7.44 17.09L17.76 6.77L20.15 9.15L9.8 19.45Z" fill="#86d688"/><path d="M11.2 20.85L21.52 10.53L23.28 12.29L12.96 22.61Z" fill="#3d9a42"/><path d="M17.76 6.77L18.6 5.9Q19.3 5.2 20 5.9L24.1 10Q24.8 10.7 24.1 11.4L23.28 12.29Z" fill="#c9d9c9"/><path d="M5.25 24.8L7.44 17.09L12.96 22.61Z" fill="#f3c26e"/><path d="M5.25 24.8L6.1 21.9L8.2 24Z" fill="#e28a18"/></svg><span class="pt" style="letter-spacing:-0.548px">Adjust code style settings</span></div>
<div class="pi" style="top:40px"><svg class="ic" style="left:19px;top:7px" width="26" height="27" viewBox="0 0 26 27"><defs><linearGradient id="lf2" gradientUnits="userSpaceOnUse" x1="0" x2="19.4" y1="0" y2="0"><stop offset="0" stop-color="#d3c4a8"/><stop offset="0.62" stop-color="#d3c4a8"/><stop offset="1" stop-color="#d3c4a8" stop-opacity="0"/></linearGradient></defs><g fill="url(#lf2)"><rect x="0.9" y="0.95" width="18.5" height="0.95"/><rect x="0.9" y="2.96" width="18.5" height="0.95"/><rect x="0.9" y="4.97" width="16.3" height="0.95"/><rect x="0.9" y="6.98" width="14.2" height="0.95"/><rect x="0.9" y="8.99" width="12.2" height="0.95"/><rect x="0.9" y="11.00" width="10.2" height="0.95"/><rect x="0.9" y="13.01" width="8.2" height="0.95"/></g><path d="M7.44 17.09L17.76 6.77L23.28 12.29L12.96 22.61Z" fill="#55b558"/><path d="M7.44 17.09L17.76 6.77L20.15 9.15L9.8 19.45Z" fill="#86d688"/><path d="M11.2 20.85L21.52 10.53L23.28 12.29L12.96 22.61Z" fill="#3d9a42"/><path d="M17.76 6.77L18.6 5.9Q19.3 5.2 20 5.9L24.1 10Q24.8 10.7 24.1 11.4L23.28 12.29Z" fill="#c9d9c9"/><path d="M5.25 24.8L7.44 17.09L12.96 22.61Z" fill="#f3c26e"/><path d="M5.25 24.8L6.1 21.9L8.2 24Z" fill="#e28a18"/></svg><span class="pt" style="letter-spacing:-0.815px">Generate PHPDoc for function</span><svg class="ic" style="left:634px;top:13px" width="12" height="16" viewBox="0 0 12 15"><path d="M0.5 0.5L11.5 7.5L0.5 14.5Z" fill="#9d9d9d"/></svg></div>
<div class="pi" style="top:80px"><svg class="ic" style="left:19px;top:7px" width="26" height="27" viewBox="0 0 26 27"><defs><linearGradient id="lf3" gradientUnits="userSpaceOnUse" x1="0" x2="19.4" y1="0" y2="0"><stop offset="0" stop-color="#d3c4a8"/><stop offset="0.62" stop-color="#d3c4a8"/><stop offset="1" stop-color="#d3c4a8" stop-opacity="0"/></linearGradient></defs><g fill="url(#lf3)"><rect x="0.9" y="0.95" width="18.5" height="0.95"/><rect x="0.9" y="2.96" width="18.5" height="0.95"/><rect x="0.9" y="4.97" width="16.3" height="0.95"/><rect x="0.9" y="6.98" width="14.2" height="0.95"/><rect x="0.9" y="8.99" width="12.2" height="0.95"/><rect x="0.9" y="11.00" width="10.2" height="0.95"/><rect x="0.9" y="13.01" width="8.2" height="0.95"/></g><path d="M7.44 17.09L17.76 6.77L23.28 12.29L12.96 22.61Z" fill="#55b558"/><path d="M7.44 17.09L17.76 6.77L20.15 9.15L9.8 19.45Z" fill="#86d688"/><path d="M11.2 20.85L21.52 10.53L23.28 12.29L12.96 22.61Z" fill="#3d9a42"/><path d="M17.76 6.77L18.6 5.9Q19.3 5.2 20 5.9L24.1 10Q24.8 10.7 24.1 11.4L23.28 12.29Z" fill="#c9d9c9"/><path d="M5.25 24.8L7.44 17.09L12.96 22.61Z" fill="#f3c26e"/><path d="M5.25 24.8L6.1 21.9L8.2 24Z" fill="#e28a18"/></svg><span class="pt" style="letter-spacing:-1.14px">Surround with &#x27;if(!empty($this-&gt;...rData)){...}&#x27;</span><svg class="ic" style="left:634px;top:13px" width="12" height="16" viewBox="0 0 12 15"><path d="M0.5 0.5L11.5 7.5L0.5 14.5Z" fill="#9d9d9d"/></svg></div>
<div class="pi" style="top:120px"><svg class="ic" style="left:19px;top:7px" width="26" height="27" viewBox="0 0 26 27"><defs><linearGradient id="lf4" gradientUnits="userSpaceOnUse" x1="0" x2="19.4" y1="0" y2="0"><stop offset="0" stop-color="#d3c4a8"/><stop offset="0.62" stop-color="#d3c4a8"/><stop offset="1" stop-color="#d3c4a8" stop-opacity="0"/></linearGradient></defs><g fill="url(#lf4)"><rect x="0.9" y="0.95" width="18.5" height="0.95"/><rect x="0.9" y="2.96" width="18.5" height="0.95"/><rect x="0.9" y="4.97" width="16.3" height="0.95"/><rect x="0.9" y="6.98" width="14.2" height="0.95"/><rect x="0.9" y="8.99" width="12.2" height="0.95"/><rect x="0.9" y="11.00" width="10.2" height="0.95"/><rect x="0.9" y="13.01" width="8.2" height="0.95"/></g><path d="M7.44 17.09L17.76 6.77L23.28 12.29L12.96 22.61Z" fill="#55b558"/><path d="M7.44 17.09L17.76 6.77L20.15 9.15L9.8 19.45Z" fill="#86d688"/><path d="M11.2 20.85L21.52 10.53L23.28 12.29L12.96 22.61Z" fill="#3d9a42"/><path d="M17.76 6.77L18.6 5.9Q19.3 5.2 20 5.9L24.1 10Q24.8 10.7 24.1 11.4L23.28 12.29Z" fill="#c9d9c9"/><path d="M5.25 24.8L7.44 17.09L12.96 22.61Z" fill="#f3c26e"/><path d="M5.25 24.8L6.1 21.9L8.2 24Z" fill="#e28a18"/></svg><span class="pt" style="letter-spacing:-0.995px">Surround with &#x27;if(isset($this-&gt;...rData)){...}&#x27;</span><svg class="ic" style="left:634px;top:13px" width="12" height="16" viewBox="0 0 12 15"><path d="M0.5 0.5L11.5 7.5L0.5 14.5Z" fill="#9d9d9d"/></svg></div>
</div>
</body></html>
